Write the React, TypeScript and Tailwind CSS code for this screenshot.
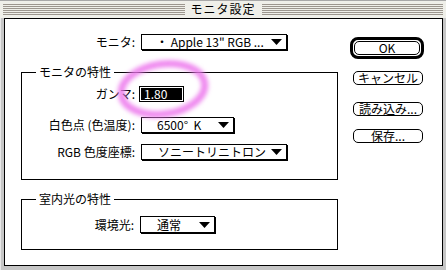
import React from "react";

function Tri() {
  return (
    <svg width="11" height="6" viewBox="0 0 11 6" className="block">
      <polygon points="0,0 11,0 5.5,6" fill="#000" />
    </svg>
  );
}

function Popup({ className, text, textClass }: { className: string; text: string; textClass?: string }) {
  return (
    <div
      className={
        "h-[16px] border border-black bg-white shadow-[1px_1px_0_0_#000] flex items-center justify-between pr-[4px] " +
        className
      }
    >
      <span className={"leading-[14px] whitespace-pre " + (textClass ?? "pl-[14px]")}>{text}</span>
      <Tri />
    </div>
  );
}

function Row({ label, labelW, children, className }: { label: string; labelW: string; children: React.ReactNode; className?: string }) {
  return (
    <div className={"flex items-center " + (className ?? "")}>
      <span className={"text-right leading-[14px] whitespace-pre " + labelW}>{label}</span>
      <div className="ml-[6px]">{children}</div>
    </div>
  );
}

function Group({ title, className, children }: { title: string; className: string; children: React.ReactNode }) {
  return (
    <div className={"relative border border-black " + className}>
      <span className="absolute top-[-8px] left-[14px] bg-white px-[3px] leading-[14px] whitespace-pre">{title}</span>
      {children}
    </div>
  );
}

function Btn({ label, className }: { label: string; className?: string }) {
  return (
    <div
      className={
        "h-[14px] border border-black rounded-[5px] flex items-center justify-center leading-[12px] " + (className ?? "")
      }
    >
      {label}
    </div>
  );
}

export default function App() {
  return (
    <div className="w-[446px] h-[270px] bg-[#c6c6c6] flex flex-col relative overflow-hidden text-[12px] text-black font-['Noto_Sans_CJK_JP','Noto_Sans',sans-serif]">
      {/* title bar */}
      <div className="h-[18px] bg-[#efefe9] flex items-start px-[3px] border-t border-[#a8a8a8]">
        <div className="flex-1 mt-[3px] h-[11px] bg-[repeating-linear-gradient(to_bottom,#9c968e_0,#9c968e_1px,transparent_1px,transparent_2px)]" />
        <div className="px-[6px] leading-[16px] tracking-[1px]">モニタ設定</div>
        <div className="flex-1 mt-[3px] h-[11px] bg-[repeating-linear-gradient(to_bottom,#9c968e_0,#9c968e_1px,transparent_1px,transparent_2px)]" />
      </div>
      {/* body */}
      <div className="flex-1 pl-[3px] pr-[4px] pb-[4px] border-l border-[#e8e8e8]">
        <div className="w-[439px] h-[248px] border border-black bg-white flex">
          {/* left column */}
          <div className="ml-[16px] w-[317px] flex flex-col">
            <Row label="モニタ:" labelW="w-[114px]" className="mt-[14px] h-[17px]">
              <Popup className="w-[146px]" text={"・ Apple 13\" RGB ..."} />
            </Row>
            <Group title="モニタの特性" className="mt-[22px] h-[108px]">
              <Row label="ガンマ:" labelW="w-[113px]" className="mt-[13px]">
                <div className="w-[45px] h-[16px] border border-black bg-black shadow-[inset_0_0_0_1px_#ffffff] text-white pl-[4px] leading-[14px] -ml-[2px]">
                  1.80
                </div>
              </Row>
              <Row label="白色点 (色温度):" labelW="w-[113px]" className="mt-[15px]">
                <Popup className="w-[93px]" text={"6500°  K"} textClass="pl-[15px]" />
              </Row>
              <Row label="RGB 色度座標:" labelW="w-[113px]" className="mt-[11px]">
                <Popup className="w-[146px]" text="ソニートリニトロン" textClass="pl-[16px]" />
              </Row>
            </Group>
            <Group title="室内光の特性" className="mt-[19px] h-[51px]">
              <Row label="環境光:" labelW="w-[112px]" className="mt-[16px]">
                <Popup className="w-[75px] h-[17px]" text="通常" textClass="pl-[16px]" />
              </Row>
            </Group>
          </div>
          {/* right column */}
          <div className="ml-[12px] flex flex-col">
            <div className="mt-[18px] w-[74px] h-[22px] border-[3px] border-black rounded-[8px] p-[1px]">
              <Btn label="OK" className="w-full" />
            </div>
            <Btn label="キャンセル" className="mt-[12px] ml-[3px] w-[70px]" />
            <Btn label="読み込み..." className="mt-[17px] ml-[3px] w-[70px]" />
            <Btn label="保存..." className="mt-[13px] ml-[3px] w-[70px]" />
          </div>
        </div>
      </div>
      {/* pink highlight ellipse */}
      <svg className="absolute left-0 top-0 pointer-events-none" width="446" height="270">
        <defs>
          <filter id="blur" x="-20%" y="-20%" width="140%" height="140%">
            <feGaussianBlur stdDeviation="2" />
          </filter>
        </defs>
        <ellipse
          cx="163"
          cy="89"
          rx="42"
          ry="25"
          transform="rotate(-8 163 89)"
          fill="none"
          stroke="#ec74ec"
          strokeOpacity="0.85"
          strokeWidth="7"
          filter="url(#blur)"
        />
      </svg>
    </div>
  );
}
